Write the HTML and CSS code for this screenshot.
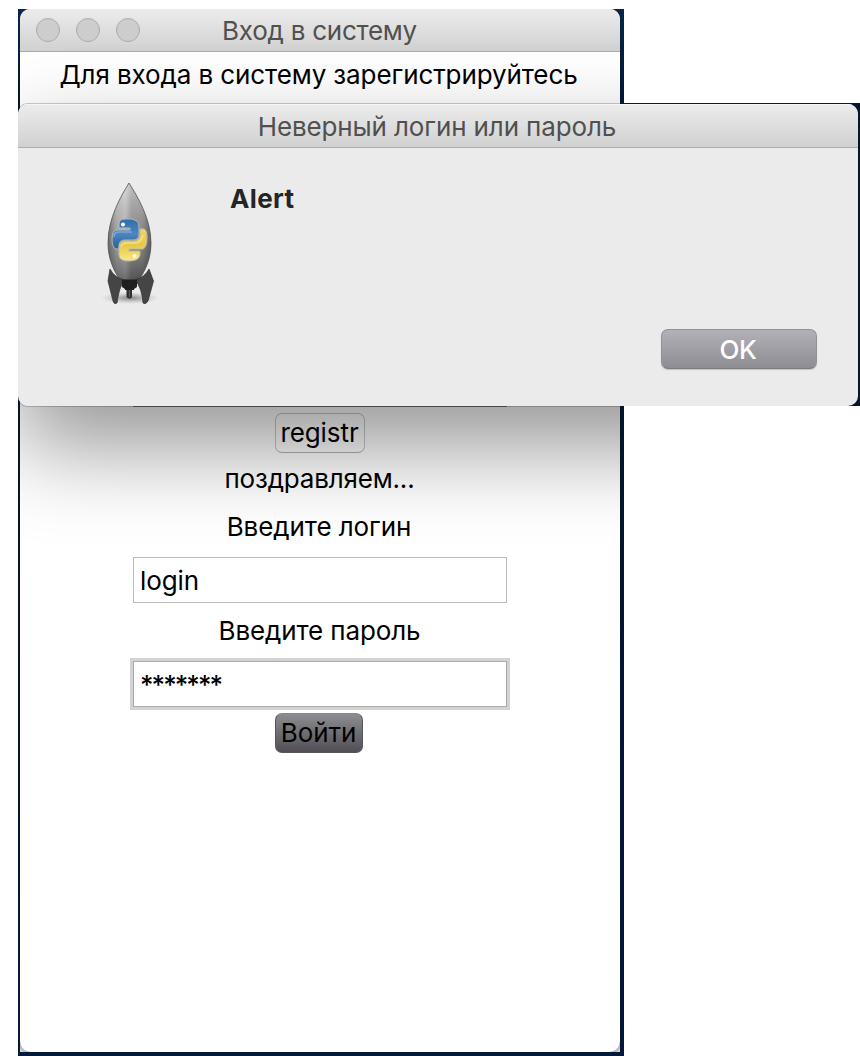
FILE: index.html
```html
<!DOCTYPE html>
<html lang="ru">
<head>
<meta charset="utf-8">
<title>Вход в систему</title>
<link rel="stylesheet" href="styles.css">
</head>
<body>
<main class="desktop">
  <section class="window">
    <header class="titlebar">
      <div class="lights"><i></i><i></i><i></i></div>
      <h1 class="title">Вход в систему</h1>
    </header>
    <form class="form">
      <p class="label intro">Для входа в систему зарегистрируйтесь</p>
      <div class="covered-field"></div>
      <button type="button" class="btn btn-register">registr</button>
      <p class="label congrats">поздравляем...</p>
      <p class="label ask-login">Введите логин</p>
      <input class="field" type="text" value="login">
      <p class="label ask-pass">Введите пароль</p>
      <input class="field focused" type="text" value="*******">
      <button type="button" class="btn btn-enter">Войти</button>
    </form>
    <div class="cast-shadow"></div>
  </section>
</main>
<div class="dialog-backdrop">
  <section class="dialog">
    <header class="dialog-bar"><h2 class="title">Неверный логин или пароль</h2></header>
    <div class="dialog-body">
      <svg class="rocket" viewBox="0 0 60 130" width="60" height="130">
        <defs>
          <linearGradient id="hull" x1="0" x2="1" y1="0" y2="0">
            <stop offset="0" stop-color="#5a5a5a"/><stop offset=".2" stop-color="#a0a0a0"/><stop offset=".4" stop-color="#b4b4b4"/><stop offset=".55" stop-color="#858585"/><stop offset=".8" stop-color="#7d7d7d"/><stop offset="1" stop-color="#4a4a4a"/>
          </linearGradient>
          <linearGradient id="shade" x1="0" x2="0" y1="0" y2="1">
            <stop offset="0" stop-color="#fff" stop-opacity=".5"/><stop offset=".45" stop-color="#bbb" stop-opacity=".25"/><stop offset="1" stop-color="#222" stop-opacity=".5"/>
          </linearGradient>
          <linearGradient id="blue" x1="0" x2="0" y1="0" y2="1"><stop offset="0" stop-color="#2f6cab"/><stop offset=".5" stop-color="#4a86c0"/><stop offset="1" stop-color="#28609c"/></linearGradient>
          <linearGradient id="gold" x1="0" x2="0" y1="0" y2="1"><stop offset="0" stop-color="#f5d65a"/><stop offset=".5" stop-color="#e7c846"/><stop offset="1" stop-color="#fae887"/></linearGradient>
          <radialGradient id="ground"><stop offset="0" stop-color="#777" stop-opacity=".9"/><stop offset="1" stop-color="#aaa" stop-opacity="0"/></radialGradient>
        </defs>
        <ellipse cx="30" cy="118" rx="29" ry="6" fill="url(#ground)"/>
        <path d="M29 3C21 16 8 38 8 63C8 79 14 91 20 100H39C45 91 51 79 51 63C51 38 37 16 29 3Z" fill="url(#hull)"/>
        <path d="M29 3C21 16 8 38 8 63C8 79 14 91 20 100H39C45 91 51 79 51 63C51 38 37 16 29 3Z" fill="url(#shade)" stroke="#555" stroke-width=".8"/>
        <path d="M10 89L8 101L13 121Q14 125 17 123Q19 108 24 100Q14 97 10 89ZM49 89L53.500 101L48 121Q46 125 43 123Q42 108 35 100Q45 97 49 89Z" fill="#454545" stroke="#2f2f2f" stroke-width=".7"/>
        <path d="M22 99.500H37V107L34 109V110H25V109L22 107Z" fill="#202020"/>
        <path d="M26.500 110H32V117Q29.500 120 26.500 117Z" fill="#2c2c2c"/>
        <path d="M29.500 110V117" stroke="#555" stroke-width="1.500"/>
        <g stroke="#b9b9b0" stroke-width="1" stroke-linejoin="round">
          <path d="M19 44Q19 39 25 39Q33 38 37 41Q39 43 39 47V54Q39 60 33 60H25Q19 60 19 66V69H16Q12 67 12 60Q12 50 17 50H30V48H19Z" fill="url(#blue)"/>
          <path d="M40 49H44Q47 50 47 58Q47 67 43 69H29V71H40V75Q39 81 29 81Q19 81 19 75V67Q19 61 26 61H34Q40 60 40 54Z" fill="url(#gold)"/>
        </g>
        <path d="M14 57Q14 52 19 52H32" fill="none" stroke="#9cc3ea" stroke-opacity=".6" stroke-width="1.500"/>
        <path d="M21 67Q22 63 27 63H35Q41 63 43 55" fill="none" stroke="#fff" stroke-opacity=".4" stroke-width="1.500"/>
        <circle cx="23" cy="44.500" r="2" fill="#fff"/><circle cx="34.500" cy="76" r="2" fill="#fff"/>
      </svg>
      <p class="message">Alert</p>
      <button type="button" class="ok">OK</button>
    </div>
  </section>
</div>
</body>
</html>
```
FILE: styles.css
```css
* { box-sizing: border-box; }
html, body { margin: 0; width: 860px; height: 1056px; overflow: hidden; background: #fff; }
body { position: relative; padding: 9px 0 0 18px; font: 26px/32px Inter, "Noto Sans", sans-serif; letter-spacing: -.08px; color: #000; }
h1, h2, p { margin: 0; font: inherit; }
button, input { font: inherit; letter-spacing: inherit; color: inherit; outline: 0; margin: 0; }

.desktop { width: 606px; height: 1047px; padding: 0 4px 4px 2px; background: linear-gradient(#08264b, #04142a 10%, #04142a 40%, #03193a); }
.window { position: relative; width: 600px; height: 1043px; overflow: hidden; border-radius: 10px 10px 0 0; background: #fff; display: flex; flex-direction: column; }
.window::before, .window::after { content: ""; position: absolute; bottom: 0; width: 10px; height: 10px; }
.window::before { left: 0; background: radial-gradient(circle at 100% 0, transparent 9px, #b8b8b8 10px, #e2e2e2 14px); }
.window::after { right: 0; background: radial-gradient(circle at 0 0, transparent 9px, #b8b8b8 10px, #e2e2e2 14px); }
.titlebar { height: 43px; flex: none; display: grid; grid-template-columns: 1fr; align-items: center; background: linear-gradient(#ececec, #d1d1d1); border-bottom: 1px solid #aaa; }
.lights, .titlebar .title { grid-area: 1 / 1; }
.lights { display: flex; gap: 16px; padding-left: 16px; }
.lights i { width: 24px; height: 24px; border-radius: 50%; background: #cdcdcd; border: 1px solid #ababab; }
.title { text-align: center; color: #505050; letter-spacing: -.13px; }
.titlebar .title { padding: 2px 1px 0 0; letter-spacing: -.25px; }

.form { display: flex; flex-direction: column; align-items: center; }
.label { height: 32px; text-align: center; }
.intro { margin-top: 7px; padding-right: 3px; letter-spacing: -.1px; }
.covered-field { width: 374px; height: 46px; margin-top: 270px; border: 1px solid #888; }
.btn { height: 40px; padding: 0; border-radius: 7px; display: flex; justify-content: center; align-items: center; }
.btn-register { width: 90px; margin-top: 6px; padding-right: 1px; background: transparent; border: 1px solid #c8c8c8; border-bottom-color: #b4b4b4; }
.congrats { margin-top: 10px; padding-right: 1px; letter-spacing: -.18px; }
.ask-login { margin-top: 16px; padding-right: 2px; }
.field { width: 374px; height: 46px; border: 1px solid #bcbcbc; border-radius: 0; padding: 0 6px; background: #fff; }
.ask-login + .field { margin-top: 14px; }
.ask-pass { margin-top: 12px; padding-right: 1px; letter-spacing: -.12px; }
.focused { margin-top: 14px; border-color: #ababab; box-shadow: 0 0 0 3px #d3d3d4; letter-spacing: -1.95px; font-weight: 500; }
.btn-enter { width: 88px; margin: 6px 2px 0 0; border: 1px solid #57555b; border-top-color: #858488; background: linear-gradient(#8d8c91, #514f55); padding-right: 1px; }
.cast-shadow { position: absolute; left: -2px; top: 95px; width: 840px; height: 302px; border-radius: 10px; box-shadow: 0 40px 90px rgba(0, 0, 0, .42), 0 0 0 1px rgba(0, 0, 0, .2); pointer-events: none; }

.dialog-backdrop { position: absolute; left: 18px; top: 103px; width: 842px; height: 303px; padding: 1px 2px 0 0; background: linear-gradient(90deg, transparent 602px, #04172f 602px); }
.dialog { width: 840px; height: 302px; border-radius: 10px; overflow: hidden; background: #ebebeb; }
.dialog-bar { height: 44px; padding: 7px 2px 0 0; background: linear-gradient(#ececec, #d1d1d1); border-bottom: 1px solid #acacac; box-shadow: inset 0 1px #f5f5f5; }
.dialog-body { display: grid; grid-template-columns: 212px 1fr 156px; padding: 32px 41px 0 0; }
.rocket { margin: 0 0 0 82px; display: block; }
.message { margin-top: 3px; font-weight: 700; color: #252525; letter-spacing: .35px; }
.ok { width: 156px; height: 40px; margin-top: 149px; padding: 2px 2px 0 0; border: 1px solid #929197; border-bottom-color: #7c7b80; border-radius: 7px; background: linear-gradient(#b2b1b7, #8e8d93); color: #fff; font-weight: 500; letter-spacing: -.5px; box-shadow: 0 1px 1px rgba(0, 0, 0, .18); }
```
